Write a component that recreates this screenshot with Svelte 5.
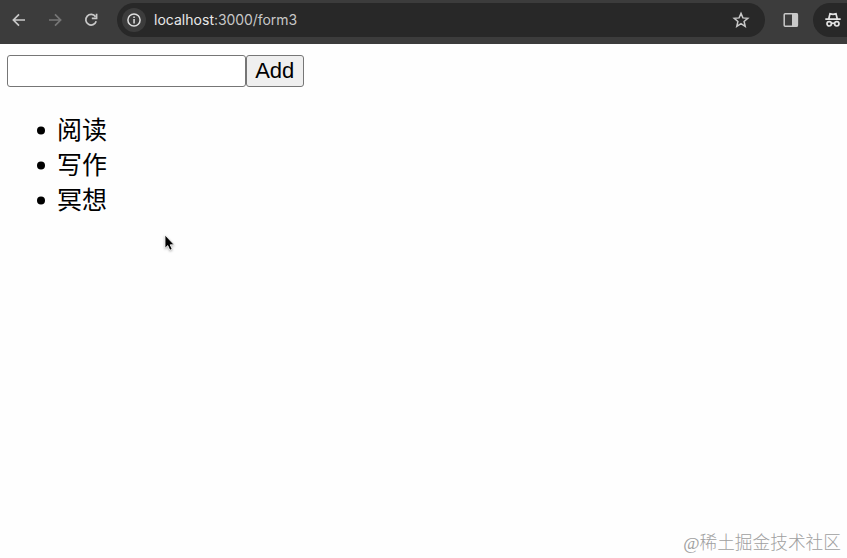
<script>
  let items = $state(['阅读', '写作', '冥想']);
  let draft = $state('');

  function add() {
    const value = draft.trim();
    if (value) {
      items.push(value);
      draft = '';
    }
  }
</script>

<div class="window">
  <header class="toolbar">
    <nav class="nav">
      <svg width="14" height="14" viewBox="0 0 14 14" fill="none" stroke="#c9c9c9" stroke-width="1.7"><path d="M13 7H1.8M7 1.4L1.4 7L7 12.6" /></svg>
      <svg width="14" height="14" viewBox="0 0 14 14" fill="none" stroke="#777" stroke-width="1.7"><path d="M1 7H12.2M7 1.4L12.6 7L7 12.6" /></svg>
      <svg width="14" height="14" viewBox="0 0 14 14" fill="none" stroke="#c9c9c9" stroke-width="1.7"><path d="M11.5 3.7A5.3 5.3 0 1 0 12.2 8.3M12.6 .7V5.4H7.8" /></svg>
    </nav>
    <div class="address">
      <span class="info">
        <svg width="14" height="14" viewBox="0 0 14 14"><circle cx="7" cy="7" r="6.1" fill="none" stroke="#e0e0e0" stroke-width="1.5" /><path d="M6.3 6.1h1.5v4.3H6.3zM6.3 3.5h1.5v1.5H6.3z" fill="#e0e0e0" /></svg>
      </span>
      <span class="url"><b>localhost</b>:3000/form3</span>
      <svg class="star" width="18" height="18" viewBox="0 0 18 18" fill="none" stroke="#c9c9c9" stroke-width="1.5"><path d="M9 2.4L10.9 6.9L15.8 7.3L12.1 10.5L13.2 15.3L9 12.7L4.8 15.3L5.9 10.5L2.2 7.3L7.1 6.9Z" /></svg>
    </div>
    <svg class="panel" width="16" height="16" viewBox="0 0 16 16"><rect x="1.2" y="1.7" width="13.2" height="12.6" rx="1" fill="none" stroke="#c9c9c9" stroke-width="1.5" /><path d="M9 1.5h5.6v13H9z" fill="#c9c9c9" /></svg>
    <div class="profile">
      <svg width="16" height="16" viewBox="0 0 16 16" fill="none" stroke="#e3e3e3" stroke-width="1.7"><path d="M.3 7.2H15.7M3.7 7L5 1.8L8 2.4L11 1.8L12.3 7M6.5 11.5Q8 10.6 9.5 11.5" /><circle cx="4.2" cy="11.8" r="2.2" /><circle cx="11.8" cy="11.8" r="2.2" /></svg>
    </div>
  </header>

  <main>
    <div class="form">
      <input type="text" bind:value={draft} aria-label="Item" />
      <button type="button" onclick={add}>Add</button>
    </div>
    <ul>
      {#each items as item}
        <li>{item}</li>
      {/each}
    </ul>
  </main>

  <footer>@稀土掘金技术社区</footer>

  <svg class="cursor" width="14" height="21" viewBox="0 0 14 21"><path d="M2 2V15.2L4.8 12.6L6.8 17.2L9.2 16.2L7.2 11.8H11.2Z" fill="#000" stroke="#fff" stroke-width="0.8" /></svg>
</div>

<style>
  :global(body) {
    margin: 0;
    background: #fefefe;
  }
  .window {
    position: relative;
    display: flex;
    flex-direction: column;
    width: 847px;
    height: 558px;
    overflow: hidden;
    background: #fefefe;
    color: #000;
    font-family: "Liberation Sans", "Noto Sans CJK SC", sans-serif;
  }
  svg {
    display: block;
    flex: none;
  }
  .toolbar {
    display: flex;
    align-items: center;
    flex: none;
    box-sizing: border-box;
    height: 44px;
    padding: 0 0 4px 12px;
    background: #3c3c3c;
  }
  .nav {
    display: flex;
    flex: none;
    gap: 22px;
    width: 105px;
  }
  .address {
    display: flex;
    align-items: center;
    flex: none;
    box-sizing: border-box;
    width: 648px;
    height: 34px;
    padding: 0 15px 0 5px;
    border-radius: 17px;
    background: #282828;
  }
  .info {
    display: flex;
    align-items: center;
    justify-content: center;
    width: 24px;
    height: 24px;
    border-radius: 50%;
    background: #3c3c3c;
  }
  .url {
    margin-left: 8px;
    color: #c7c7c7;
    font: 14px/20px Inter, sans-serif;
    letter-spacing: -0.07px;
  }
  .url b {
    color: #e8e8e8;
    font-weight: 400;
    letter-spacing: 0.02px;
  }
  .star {
    margin-left: auto;
  }
  .panel {
    margin-left: 18px;
  }
  .profile {
    display: flex;
    align-items: center;
    box-sizing: border-box;
    width: 48px;
    height: 34px;
    margin-left: 14px;
    padding-left: 12px;
    border-radius: 17px 0 0 17px;
    background: #282828;
    flex: none;
  }
  main {
    flex: 1;
    padding: 11px 7px 0;
  }
  .form {
    display: flex;
  }
  input,
  button {
    box-sizing: border-box;
    height: 32px;
    margin: 0;
    border: 1px solid #767676;
    border-radius: 3px;
    font: 22px/28px "Liberation Sans", sans-serif;
  }
  input {
    width: 238.5px;
    padding: 1px 4px;
    background: #fff;
    outline: none;
  }
  button {
    width: 58.5px;
    padding: 0;
    background: #efefef;
    color: #000;
  }
  ul {
    margin: 26px 0 0;
    padding: 0 0 0 30px;
    font-size: 25px;
    line-height: 35px;
    list-style: none;
  }
  li {
    display: flex;
    align-items: center;
  }
  li::before {
    content: "";
    width: 8px;
    height: 8px;
    margin-right: 12px;
    border-radius: 50%;
    background: #000;
    transform: translateY(-0.5px);
  }
  footer {
    align-self: flex-end;
    padding: 0 6px 2px 0;
    color: #a0a0a0;
    font: 300 17.7px/26px "Liberation Serif", "Noto Sans CJK SC", serif;
    text-shadow: -0.7px -0.5px 0 #fff;
  }
  .cursor {
    position: absolute;
    left: 163px;
    top: 233px;
    filter: drop-shadow(0 1px 1px rgb(0 0 0 / 0.3));
  }
</style>
